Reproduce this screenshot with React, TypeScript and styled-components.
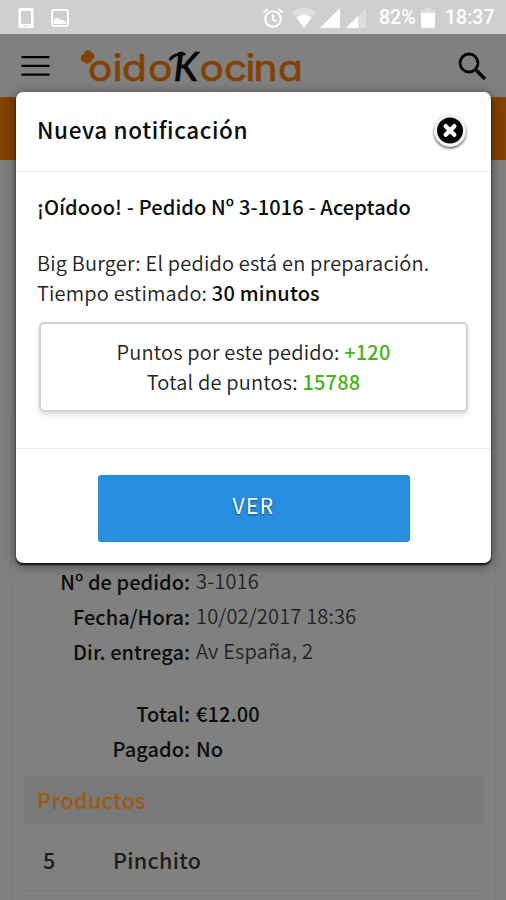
import React from "react";
import styled, { createGlobalStyle, css } from "styled-components";

const GlobalStyle = createGlobalStyle`
  *, *::before, *::after { box-sizing: border-box; }
  body {
    margin: 0;
    background: #808080;
    font-family: "Noto Sans CJK SC", "Noto Sans", sans-serif;
    color: #0c0c0c;
  }
  button { font: inherit; border: 0; padding: 0; cursor: pointer; }
`;

const Screen = styled.div`
  position: relative;
  display: flex;
  flex-direction: column;
  width: 506px;
  height: 900px;
  overflow: hidden;
  background: #808080;
`;

const StatusBar = styled.div`
  display: flex;
  align-items: center;
  justify-content: space-between;
  flex: none;
  height: 34px;
  padding: 1px 11px 0 17px;
  background: #cfcfcf;
  color: #fff;
  font-family: Roboto, sans-serif;
  font-weight: 500;
`;

const StatusGroup = styled.div`
  display: flex;
  align-items: center;
`;

const StatusItem = styled.span<{ $before?: number }>`
  margin-left: ${(p) => p.$before ?? 0}px;
  svg { display: block; }
`;

const StatusText = styled.span<{ $size: number; $width: number; $before: number }>`
  width: ${(p) => p.$width}px;
  margin-left: ${(p) => p.$before}px;
  font-size: ${(p) => p.$size}px;
  line-height: 34px;
  white-space: nowrap;
`;

const AppHeader = styled.header`
  display: flex;
  align-items: center;
  flex: none;
  height: 63px;
  padding: 0 19px 0 21px;
  background: #808080;
  svg { display: block; }
`;

const LogoSlot = styled.div`
  flex: 1;
  margin-left: 29px;
`;

const IconButton = styled.button`
  background: none;
  color: #050505;
`;

const OrangeStrip = styled.div`
  flex: none;
  height: 63px;
  background: #824200;
`;

const OrderCard = styled.section`
  flex: none;
  height: 560px;
  margin: 255px 10px 0 11px;
  padding: 148px 11px 0 12px;
  border: 1px solid #7b7b7b;
  background: #808080;
`;

const Fields = styled.dl`
  margin: 0;
`;

const Field = styled.div<{ $spaced?: boolean }>`
  display: grid;
  grid-template-columns: 166px 1fr;
  column-gap: 6px;
  height: 35px;
  margin-top: ${(p) => (p.$spaced ? 27 : 0)}px;
  line-height: 35px;
  font-size: 20px;
  white-space: nowrap;
`;

const FieldLabel = styled.dt`
  font-weight: 500;
  text-align: right;
  letter-spacing: 0.05px;
`;

const FieldValue = styled.dd<{ $strong?: boolean }>`
  margin: 0;
  font-weight: ${(p) => (p.$strong ? 500 : 350)};
  color: ${(p) => (p.$strong ? "#0c0c0c" : "#222")};
  letter-spacing: ${(p) => (p.$strong ? 0.15 : 0.2)}px;
  line-height: ${(p) => (p.$strong ? 35 : 33)}px;
`;

const SectionTitle = styled.h2`
  height: 48px;
  margin: 10px 0 0;
  padding-left: 13px;
  background: #797979;
  color: #a0580f;
  font-size: 21.5px;
  font-weight: 500;
  line-height: 48px;
  letter-spacing: 0.45px;
`;

const ProductRow = styled.div`
  display: grid;
  grid-template-columns: 70px 1fr;
  height: 67px;
  padding-left: 19px;
  border-bottom: 1px solid #777;
  color: #1c1c1c;
  font-size: 21.5px;
  font-weight: 500;
  line-height: 72px;
  letter-spacing: 0.35px;
`;

const Overlay = styled.div`
  position: absolute;
  inset: 34px 0 0;
  display: flex;
  align-items: flex-start;
  padding: 58px 15px 0 16px;
`;

const Dialog = styled.div`
  flex: 1;
  height: 471px;
  border-radius: 7px;
  background: #fff;
  box-shadow: 0 2px 2px rgba(0, 0, 0, 0.85), 0 2px 12px rgba(0, 0, 0, 0.5);
`;

const DialogHeader = styled.div`
  display: flex;
  align-items: center;
  justify-content: space-between;
  height: 80px;
  padding: 0 21px;
  border-bottom: 1px solid #ebebeb;
`;

const DialogTitle = styled.h1`
  margin: 0;
  padding-bottom: 6px;
  font-size: 22.5px;
  font-weight: 500;
  line-height: 30px;
  letter-spacing: 0.6px;
`;

const CloseButton = styled.button`
  width: 40px;
  height: 40px;
  background: none;
  svg { display: block; overflow: visible; }
`;

const DialogBody = styled.div`
  height: 277px;
  padding: 20px 23px 0 21px;
  border-bottom: 1px solid #ebebeb;
  white-space: nowrap;
`;

const lineText = css`
  margin: 0;
  font-size: 20px;
  line-height: 29.5px;
`;

const Lead = styled.p`
  ${lineText}
  margin-bottom: 26.5px;
  font-weight: 500;
  letter-spacing: 0.13px;
`;

const Line = styled.p`
  ${lineText}
  font-weight: 350;
  color: #222;
  letter-spacing: 0.18px;
`;

const Strong = styled.strong`
  font-weight: 500;
  color: #0c0c0c;
`;

const Points = styled.strong`
  color: #42b517;
  font-weight: 500;
`;

const PointsBox = styled.div`
  height: 90px;
  margin: 15px 0 0 2px;
  padding-top: 13px;
  border: 2px solid #d2d2d2;
  border-radius: 5px;
  box-shadow: 0 3px 4px rgba(0, 0, 0, 0.13);
  text-align: center;
`;

const DialogFooter = styled.div`
  display: flex;
  justify-content: center;
  padding-top: 26px;
`;

const PrimaryButton = styled.button`
  width: 312px;
  height: 67px;
  padding-bottom: 7px;
  border-radius: 3px;
  background: #278ee0;
  color: #fff;
  font-size: 21px;
  line-height: 60px;
  letter-spacing: 1.4px;
  text-shadow: 0 1px 2px rgba(0, 0, 0, 0.5);
`;

const LogoWord = styled.text`
  font-family: Inter, sans-serif;
  font-size: 37px;
  font-weight: 400;
  font-feature-settings: "cv11";
  fill: #824200;
  stroke: #824200;
  stroke-width: 0.7px;
`;

const LogoInitial = styled.text`
  font-family: Lato, sans-serif;
  font-size: 40px;
  font-style: italic;
  fill: #060606;
  stroke: #060606;
  stroke-width: 0.7px;
`;

const Logo = () => (
  <svg width="224" height="50" viewBox="79 41 224 50" aria-label="oidoKocina">
    <g fill="#824200">
      <circle cx="84.500" cy="58" r="3.800" />
      <circle cx="88" cy="54" r="3.800" />
      <circle cx="91.200" cy="56" r="3.300" />
      <path d="M83 56L92 56L92.500 61L87 64L82 61Z" />
    </g>
    <LogoWord transform="scale(1.1 1)" y="80.800" x="80 102.600 110.900 134.500">oido</LogoWord>
    <LogoWord transform="scale(1.1 1)" y="80.800" x="181.400 203.600 223.100 230.400 252.700">ocina</LogoWord>
    <LogoInitial x="173.500" y="81">K</LogoInitial>
    <path d="M170.500 59Q173.500 54 184 54" fill="none" stroke="#060606" strokeWidth="3.200" strokeLinecap="round" />
  </svg>
);

const MenuIcon = () => (
  <svg width="29" height="20" viewBox="0 0 29 20" stroke="currentColor" strokeWidth="2.200">
    <path d="M.5 1.200h28M.5 9.900h28M.5 18.600h28" />
  </svg>
);

const SearchIcon = () => (
  <svg width="30" height="30" viewBox="0 0 30 30" fill="none" stroke="currentColor">
    <circle cx="12" cy="12" r="9" strokeWidth="2.800" />
    <path d="M18.500 18.500L28 28" strokeWidth="3.600" />
  </svg>
);

const CloseIcon = () => (
  <svg width="40" height="40" viewBox="0 0 40 40">
    <defs>
      <filter id="ring" x="-30%" y="-30%" width="160%" height="160%">
        <feDropShadow dx="0" dy="1.500" stdDeviation="1.700" floodColor="#000" floodOpacity=".75" />
      </filter>
    </defs>
    <circle cx="20" cy="19" r="15.700" fill="#f4f4f4" filter="url(#ring)" />
    <circle cx="20" cy="18.500" r="13" fill="#040404" />
    <path d="M15.700 14.200l8.600 8.600M24.300 14.200l-8.600 8.600" stroke="#fff" strokeWidth="4.400" strokeLinecap="round" />
  </svg>
);

const PhoneIcon = () => (
  <svg width="18" height="22" viewBox="0 0 18 22">
    <path fillRule="evenodd" fill="#fff" d="M3 1h12a1.500 1.500 0 0 1 1.500 1.500v17A1.500 1.500 0 0 1 15 21H3a1.500 1.500 0 0 1-1.500-1.500v-17A1.500 1.500 0 0 1 3 1zM4 4v13h10V4zM7 18.500v1h4v-1z" />
  </svg>
);

const PictureIcon = () => (
  <svg width="20" height="20" viewBox="0 0 20 20">
    <rect x="2" y="2" width="16" height="16" rx="1.500" fill="none" stroke="#fff" strokeWidth="1.800" />
    <path d="M3.500 16v-4l4-2.500 3 2.500 3 0 3 3v1z" fill="#fff" />
  </svg>
);

const AlarmIcon = () => (
  <svg width="22" height="22" viewBox="0 0 22 22" fill="none" stroke="#fff" strokeWidth="2">
    <circle cx="11" cy="12" r="7.800" />
    <path d="M11 7.500v5l3.500 2M1.500 5.500l4-3.500M20.500 5.500l-4-3.500" />
  </svg>
);

const WifiIcon = () => (
  <svg width="24" height="20" viewBox="0 0 24 20">
    <path d="M0 4Q12-4 24 4L12 20z" fill="#dedede" />
    <path d="M4.500 9.500Q12 4 19.500 9.500L12 20z" fill="#fff" />
  </svg>
);

const SignalIcon = ({ weak = false }: { weak?: boolean }) => (
  <svg width="20" height="20" viewBox="0 0 20 20">
    <path d="M0 20L20 0v20z" fill={weak ? "#dedede" : "#fff"} />
    {weak && <path d="M0 20L12 8v12z" fill="#fff" />}
  </svg>
);

const BatteryIcon = () => (
  <svg width="14" height="20" viewBox="0 0 14 20">
    <path d="M0 2h4V0h6v2h4v3H0z" fill="#dedede" />
    <path d="M0 5h14v13.500a1.500 1.500 0 0 1-1.500 1.500h-11A1.500 1.500 0 0 1 0 18.500z" fill="#fff" />
  </svg>
);

export default function App() {
  return (
    <Screen>
      <GlobalStyle />
      <StatusBar>
        <StatusGroup>
          <StatusItem><PhoneIcon /></StatusItem>
          <StatusItem $before={15}><PictureIcon /></StatusItem>
        </StatusGroup>
        <StatusGroup>
          <StatusItem><AlarmIcon /></StatusItem>
          <StatusItem $before={8}><WifiIcon /></StatusItem>
          <StatusItem $before={4}><SignalIcon /></StatusItem>
          <StatusItem $before={6}><SignalIcon weak /></StatusItem>
          <StatusText $size={19.5} $width={37} $before={13}>82%</StatusText>
          <StatusItem $before={5}><BatteryIcon /></StatusItem>
          <StatusText $size={19.5} $width={50} $before={10}>18:37</StatusText>
        </StatusGroup>
      </StatusBar>

      <AppHeader>
        <IconButton aria-label="Menú"><MenuIcon /></IconButton>
        <LogoSlot><Logo /></LogoSlot>
        <IconButton aria-label="Buscar"><SearchIcon /></IconButton>
      </AppHeader>
      <OrangeStrip />

      <OrderCard>
        <Fields>
          <Field><FieldLabel>Nº de pedido:</FieldLabel><FieldValue>3-1016</FieldValue></Field>
          <Field><FieldLabel>Fecha/Hora:</FieldLabel><FieldValue>10/02/2017 18:36</FieldValue></Field>
          <Field><FieldLabel>Dir. entrega:</FieldLabel><FieldValue>Av España, 2</FieldValue></Field>
          <Field $spaced><FieldLabel>Total:</FieldLabel><FieldValue $strong>€12.00</FieldValue></Field>
          <Field><FieldLabel>Pagado:</FieldLabel><FieldValue $strong>No</FieldValue></Field>
        </Fields>
        <SectionTitle>Productos</SectionTitle>
        <ProductRow><span>5</span><span>Pinchito</span></ProductRow>
      </OrderCard>

      <Overlay>
        <Dialog role="dialog">
          <DialogHeader>
            <DialogTitle>Nueva notificación</DialogTitle>
            <CloseButton aria-label="Cerrar"><CloseIcon /></CloseButton>
          </DialogHeader>
          <DialogBody>
            <Lead>¡Oídooo! - Pedido Nº 3-1016 - Aceptado</Lead>
            <Line>Big Burger: El pedido está en preparación.</Line>
            <Line>Tiempo estimado: <Strong>30 minutos</Strong></Line>
            <PointsBox>
              <Line>Puntos por este pedido: <Points>+120</Points></Line>
              <Line>Total de puntos: <Points>15788</Points></Line>
            </PointsBox>
          </DialogBody>
          <DialogFooter>
            <PrimaryButton>VER</PrimaryButton>
          </DialogFooter>
        </Dialog>
      </Overlay>
    </Screen>
  );
}
